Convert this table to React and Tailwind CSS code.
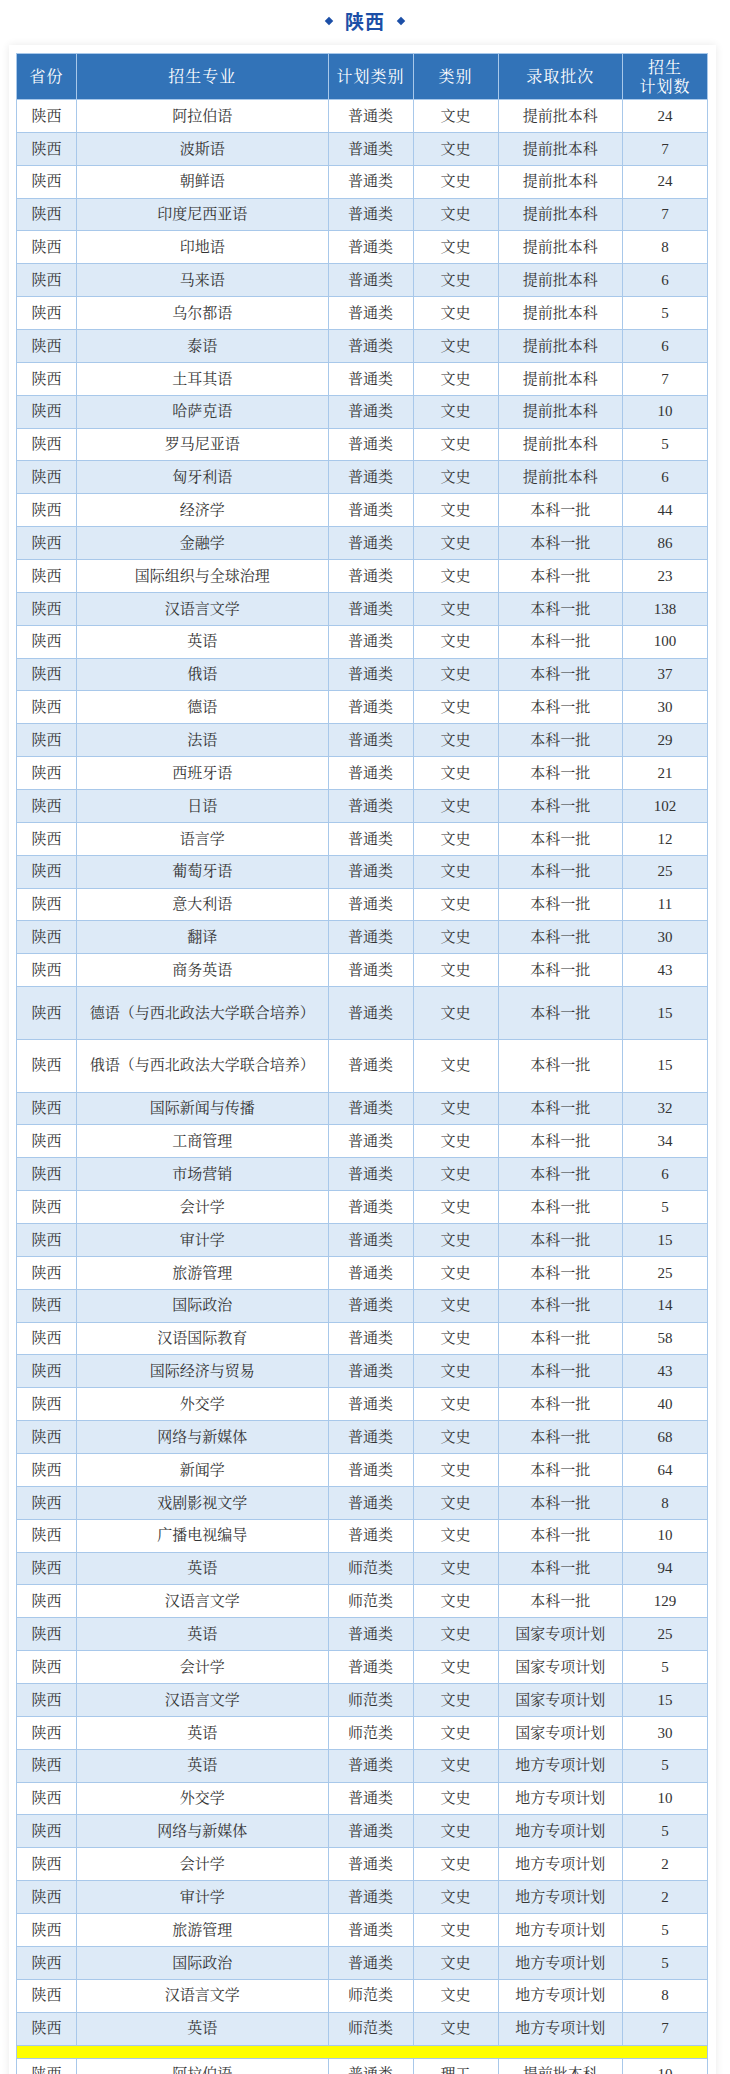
import React from "react";

const rows = [
  ["阿拉伯语", "普通类", "文史", "提前批本科", "24"],
  ["波斯语", "普通类", "文史", "提前批本科", "7"],
  ["朝鲜语", "普通类", "文史", "提前批本科", "24"],
  ["印度尼西亚语", "普通类", "文史", "提前批本科", "7"],
  ["印地语", "普通类", "文史", "提前批本科", "8"],
  ["马来语", "普通类", "文史", "提前批本科", "6"],
  ["乌尔都语", "普通类", "文史", "提前批本科", "5"],
  ["泰语", "普通类", "文史", "提前批本科", "6"],
  ["土耳其语", "普通类", "文史", "提前批本科", "7"],
  ["哈萨克语", "普通类", "文史", "提前批本科", "10"],
  ["罗马尼亚语", "普通类", "文史", "提前批本科", "5"],
  ["匈牙利语", "普通类", "文史", "提前批本科", "6"],
  ["经济学", "普通类", "文史", "本科一批", "44"],
  ["金融学", "普通类", "文史", "本科一批", "86"],
  ["国际组织与全球治理", "普通类", "文史", "本科一批", "23"],
  ["汉语言文学", "普通类", "文史", "本科一批", "138"],
  ["英语", "普通类", "文史", "本科一批", "100"],
  ["俄语", "普通类", "文史", "本科一批", "37"],
  ["德语", "普通类", "文史", "本科一批", "30"],
  ["法语", "普通类", "文史", "本科一批", "29"],
  ["西班牙语", "普通类", "文史", "本科一批", "21"],
  ["日语", "普通类", "文史", "本科一批", "102"],
  ["语言学", "普通类", "文史", "本科一批", "12"],
  ["葡萄牙语", "普通类", "文史", "本科一批", "25"],
  ["意大利语", "普通类", "文史", "本科一批", "11"],
  ["翻译", "普通类", "文史", "本科一批", "30"],
  ["商务英语", "普通类", "文史", "本科一批", "43"],
  ["德语（与西北政法大学联合培养）", "普通类", "文史", "本科一批", "15", true],
  ["俄语（与西北政法大学联合培养）", "普通类", "文史", "本科一批", "15", true],
  ["国际新闻与传播", "普通类", "文史", "本科一批", "32"],
  ["工商管理", "普通类", "文史", "本科一批", "34"],
  ["市场营销", "普通类", "文史", "本科一批", "6"],
  ["会计学", "普通类", "文史", "本科一批", "5"],
  ["审计学", "普通类", "文史", "本科一批", "15"],
  ["旅游管理", "普通类", "文史", "本科一批", "25"],
  ["国际政治", "普通类", "文史", "本科一批", "14"],
  ["汉语国际教育", "普通类", "文史", "本科一批", "58"],
  ["国际经济与贸易", "普通类", "文史", "本科一批", "43"],
  ["外交学", "普通类", "文史", "本科一批", "40"],
  ["网络与新媒体", "普通类", "文史", "本科一批", "68"],
  ["新闻学", "普通类", "文史", "本科一批", "64"],
  ["戏剧影视文学", "普通类", "文史", "本科一批", "8"],
  ["广播电视编导", "普通类", "文史", "本科一批", "10"],
  ["英语", "师范类", "文史", "本科一批", "94"],
  ["汉语言文学", "师范类", "文史", "本科一批", "129"],
  ["英语", "普通类", "文史", "国家专项计划", "25"],
  ["会计学", "普通类", "文史", "国家专项计划", "5"],
  ["汉语言文学", "师范类", "文史", "国家专项计划", "15"],
  ["英语", "师范类", "文史", "国家专项计划", "30"],
  ["英语", "普通类", "文史", "地方专项计划", "5"],
  ["外交学", "普通类", "文史", "地方专项计划", "10"],
  ["网络与新媒体", "普通类", "文史", "地方专项计划", "5"],
  ["会计学", "普通类", "文史", "地方专项计划", "2"],
  ["审计学", "普通类", "文史", "地方专项计划", "2"],
  ["旅游管理", "普通类", "文史", "地方专项计划", "5"],
  ["国际政治", "普通类", "文史", "地方专项计划", "5"],
  ["汉语言文学", "师范类", "文史", "地方专项计划", "8"],
  ["英语", "师范类", "文史", "地方专项计划", "7"],
];

const cols = "grid grid-cols-[60px_251.5px_85px_85px_124.5px_85px]";
const cell = "flex items-center justify-center border-r border-[#a8c8ea] text-center";

function Row({ data, striped, tall }) {
  const [major, plan, kind, batch, num] = data;
  return (
    <div
      className={`${cols} border-b border-[#a8c8ea] ${tall ? "h-[52.7px]" : "h-[32.87px]"} ${
        striped ? "bg-[#ddeaf7]" : "bg-white"
      }`}
    >
      <div className={cell}>陕西</div>
      <div className={cell}>{major}</div>
      <div className={cell}>{plan}</div>
      <div className={cell}>{kind}</div>
      <div className={cell}>{batch}</div>
      <div className={`${cell} font-['Liberation_Serif',serif]`}>{num}</div>
    </div>
  );
}

export default function App() {
  return (
    <div className="w-[730px] h-[2074px] overflow-hidden bg-white font-['Liberation_Serif','Noto_Serif_CJK_SC','Noto_Sans_CJK_SC',serif]">
      {/* title */}
      <div className="h-[45px] flex items-center justify-center gap-[13px] text-[#1c4fa7] pb-[3px]">
        <div className="w-[6px] h-[6px] rotate-45 bg-[#1c4fa7]" />
        <div className="text-[19px] font-bold font-['Noto_Sans_CJK_SC',sans-serif] tracking-[1px]">陕西</div>
        <div className="w-[6px] h-[6px] rotate-45 bg-[#1c4fa7]" />
      </div>

      {/* card */}
      <div className="ml-[9px] w-[707px] bg-white pl-[7px] pr-[8px] pt-[8px] shadow-[0_0_8px_rgba(0,0,0,0.09)]">
        <div className="w-[692px] border-l border-t border-[#a8c8ea] text-[15px] text-[#333]">
          <div className={`${cols} h-[46px] bg-[#3273b8] text-white text-[16px] border-b border-[#a8c8ea] tracking-[1px]`}>
            <div className={cell}>省份</div>
            <div className={cell}>招生专业</div>
            <div className={cell}>计划类别</div>
            <div className={cell}>类别</div>
            <div className={cell}>录取批次</div>
            <div className={`${cell} flex-col leading-[19px]`}>
              <span>招生</span>
              <span>计划数</span>
            </div>
          </div>
          {rows.map((r, i) => (
            <Row key={i} data={r} striped={i % 2 === 1} tall={r[5]} />
          ))}
          <div className="h-[13px] bg-[#ffff00] border-b border-[#a8c8ea] border-r" />
          <Row data={["阿拉伯语", "普通类", "理工", "提前批本科", "10"]} striped={false} />
        </div>
      </div>
    </div>
  );
}
